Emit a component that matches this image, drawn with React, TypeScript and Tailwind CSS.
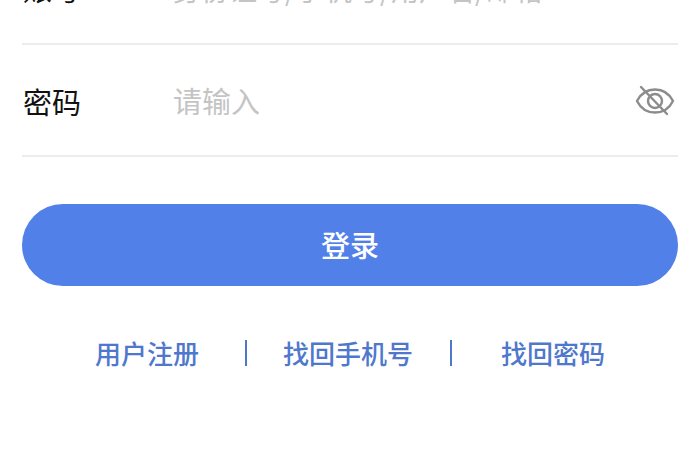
import React from "react";

const cjk = "font-['Noto_Sans_CJK_SC','Noto_Sans',sans-serif]";

function EyeOff() {
  return (
    <svg width="40" height="32" viewBox="0 0 40 32" fill="none" stroke="#8c8c8c" strokeWidth="2.4" strokeLinecap="round" strokeLinejoin="round" className="mr-[3px] mt-[2px]">
      <path d="M2 16C6 8 13 4.500 20 4.500S34 8 38 16c-4 8-11 11.500-18 11.500S6 24 2 16Z" />
      <circle cx="20" cy="16" r="7" />
      <path d="M6 2l26 27" />
    </svg>
  );
}

export default function App() {
  return (
    <div className={`h-[470px] w-[700px] overflow-hidden bg-white ${cjk}`}>
      <div className="-mt-[68px] px-[22px]">
        <div className="flex h-[113px] items-center border-b-2 border-[#ececec] pt-[2px]">
          <span className="w-[151px] pl-[1px] text-[29px] leading-none text-[#111111]">账号</span>
          <span className="text-[28px] leading-none text-[#c4c4c4]">身份证号/手机号/用户名/邮箱</span>
        </div>
        <div className="flex h-[112px] items-center border-b-2 border-[#ececec]">
          <span className="w-[151px] pl-[1px] pt-[2px] text-[29px] leading-none text-[#111111]">密码</span>
          <span className="flex-1 text-[29px] leading-none text-[#c4c4c4]">请输入</span>
          <EyeOff />
        </div>
        <button className="mt-[47px] flex h-[82px] w-full items-center justify-center rounded-full bg-[#5280e9] text-[29px] font-medium text-white">
          登录
        </button>
        <div className="mt-[54px] flex items-center text-[26px] font-medium leading-none text-[#4f78cc]">
          <span className="ml-[73px]">用户注册</span>
          <span className="ml-[46px] h-[26px] w-[2px] bg-[#4f78cc]" />
          <span className="ml-[36px]">找回手机号</span>
          <span className="ml-[37px] h-[26px] w-[2px] bg-[#4f78cc]" />
          <span className="ml-[49px]">找回密码</span>
        </div>
      </div>
    </div>
  );
}
